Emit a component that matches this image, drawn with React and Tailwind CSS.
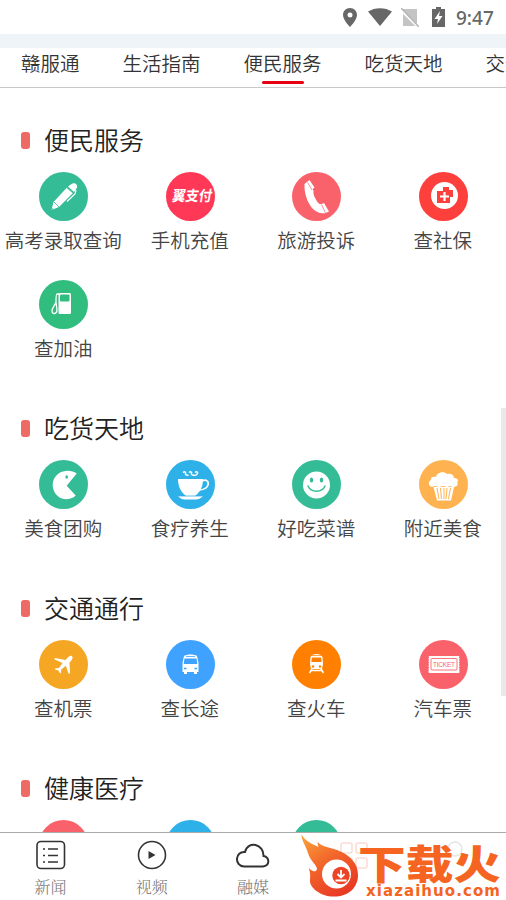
import clsx from "clsx";

const tabs = ["赣服通", "生活指南", "便民服务", "吃货天地", "交通通行"];

const sections = [
  {
    title: "便民服务",
    items: [
      { name: "高考录取查询", bg: "bg-[#33bc96]", icon: <PenIcon /> },
      { name: "手机充值", bg: "bg-[#ff3858]", icon: <PayIcon /> },
      { name: "旅游投诉", bg: "bg-[#fa626b]", icon: <PhoneIcon /> },
      { name: "查社保", bg: "bg-[#fd403c]", icon: <MedicalIcon /> },
      { name: "查加油", bg: "bg-[#31bd7e]", icon: <GasIcon /> },
    ],
  },
  {
    title: "吃货天地",
    items: [
      { name: "美食团购", bg: "bg-[#33bc96]", icon: <PacmanIcon /> },
      { name: "食疗养生", bg: "bg-[#2eb0e9]", icon: <CupIcon /> },
      { name: "好吃菜谱", bg: "bg-[#33bc96]", icon: <SmileIcon /> },
      { name: "附近美食", bg: "bg-[#ffb350]", icon: <CakeIcon /> },
    ],
  },
  {
    title: "交通通行",
    items: [
      { name: "查机票", bg: "bg-[#f5a623]", icon: <PlaneIcon /> },
      { name: "查长途", bg: "bg-[#3fa2ff]", icon: <BusIcon /> },
      { name: "查火车", bg: "bg-[#ff8000]", icon: <TrainIcon /> },
      { name: "汽车票", bg: "bg-[#fa626b]", icon: <TicketIcon /> },
    ],
  },
  {
    title: "健康医疗",
    items: [
      { name: "", bg: "bg-[#fa626b]" },
      { name: "", bg: "bg-[#2eb0e9]" },
      { name: "", bg: "bg-[#33bc96]" },
    ],
  },
];

function Icon({ children }) {
  return (
    <svg viewBox="0 0 49 49" className="block size-[49px]" fill="#fff">
      {children}
    </svg>
  );
}

function PenIcon() {
  return (
    <Icon>
      <path d="M12.500 38l2-8L28 15.500l6 5.500-14 14z" />
      <path d="M29 14.500l3.500-2.500c3-2.500 7.500 1 5 4.500L35 20z" />
      <path d="M37 18l-1 4-8 7.500" fill="none" stroke="#fff" strokeWidth="1.200" />
      <path d="M15 30l5 5M28 16l6 5" stroke="#33bc96" strokeWidth=".8" />
      <circle cx="13.500" cy="37" r=".8" fill="#33bc96" />
    </Icon>
  );
}

function PayIcon() {
  return (
    <Icon>
      <text
        x="5"
        y="29"
        fontSize="14.500"
        fontWeight="700"
        textLength="40"
        lengthAdjust="spacingAndGlyphs"
        transform="translate(5.500 0) skewX(-10)"
        fontFamily="'Noto Sans CJK SC', sans-serif"
      >
        翼支付
      </text>
    </Icon>
  );
}

function PhoneIcon() {
  return (
    <Icon>
      <path d="M12.500 12C12 20 15 30 20 36c4 4 8 6 13 5l-3-9c-2 1-4-1-5.500-3.500-2-3.500-3.500-6-3-9.500l-4-8z" />
      <path d="M12.500 12l5-4 5 7.500-4 3.500zM28.500 32.500l3.500-1.500 5 8.500-4.500 2z" />
      <path d="M15.500 10.500l4.500 7.500M29.500 32.500l4 8.500" stroke="#fa626b" strokeWidth=".7" />
    </Icon>
  );
}

function MedicalIcon() {
  return (
    <Icon>
      <circle cx="25.500" cy="23.500" r="13.500" />
      <path d="M18 19h6v-4h6v3h4v7h-3v6H18z" fill="#fd403c" />
      <path d="M25.500 20v9M21 24.500h9" stroke="#fff" strokeWidth="2.200" />
    </Icon>
  );
}

function GasIcon() {
  return (
    <Icon>
      <rect x="19.500" y="13" width="12.500" height="21" rx="1.500" />
      <rect x="21" y="14.500" width="9.500" height="7" rx="1" fill="#31bd7e" />
      <path
        d="M20 14h-2c-1 0-1 6-1 8-1 3-4 6-4 9 0 4 5 3 5-1l-1-8"
        fill="none"
        stroke="#fff"
        strokeWidth="1.300"
      />
    </Icon>
  );
}

function PacmanIcon() {
  return (
    <Icon>
      <path d="M37.700 13.500c-3-2-7-3-11-2.500-7.500.5-13 6.500-13 14s5.500 14 13 14.200c4 0 7.500-1 10-3.700l-9-9.800z" />
      <ellipse cx="27.700" cy="17" rx="1.300" ry="1.700" fill="#33bc96" />
    </Icon>
  );
}

function CupIcon() {
  return (
    <Icon>
      <path d="M12 19h25c0 8-3 13-8 17H20c-5-4-8-9-8-17z" />
      <path d="M36 21c4-2 7 0 6 4-1 3-5 5-9 5" fill="none" stroke="#fff" strokeWidth="1.700" />
      <path d="M12 36h25c-2 2.500-5 3.500-7 3.500H19c-3 0-5-1-7-3.500z" />
      <path d="M12.500 36h24" stroke="#2eb0e9" strokeWidth=".8" />
      <path
        d="M17 12.500c2-1.500 3 0 2.500 1s1 2 3 1.500M23 12.500c2-1.500 3 0 2.500 1s1 2 3 1.500M29 12.500c2-1.500 3 0 2.500 1s-1 2-3 2"
        fill="none"
        stroke="#fff"
        strokeWidth="1.500"
      />
    </Icon>
  );
}

function SmileIcon() {
  return (
    <Icon>
      <circle cx="24.500" cy="25" r="13.500" />
      <ellipse cx="19.500" cy="20" rx="1.700" ry="2.500" fill="#33bc96" />
      <ellipse cx="29.500" cy="20" rx="1.700" ry="2.500" fill="#33bc96" />
      <path d="M16 26c3 7 14 7 17 0" fill="none" stroke="#33bc96" strokeWidth="1.500" strokeLinecap="round" />
    </Icon>
  );
}

function CakeIcon() {
  return (
    <Icon>
      <path d="M13 27c-4-1-4-6-1-7-1-3 3-4 5-3 1-5 8-6 11-3 4-1 7 1 7 4 4 0 5 3 3 4 2 3-1 5-4 5l-3-1-3 1-4-1-4 1-4-1z" />
      <path d="M14.500 27h20.500l-3 13.500H18z" />
      <path
        d="M18 28l2 11M21.500 28l1 11M25 28v11M28 28l-1 11M31.500 28l-2 11"
        stroke="#ffb350"
        strokeWidth="1"
      />
    </Icon>
  );
}

function PlaneIcon() {
  return (
    <Icon>
      <path d="M33 16.200c-.8-1-3 0-4.500 1.600L26.500 20l-10.500-2-.8 1.200 8.300 3.800-3.500 5-3.500.3-.7 1.200 3.500.9 1.800 3 1-.7v-2.900l4.700-4 2.900 8.200 1.300-1-.5-10.300 2-2.500c1.300-1.500 1.500-3.200.5-4z" />
    </Icon>
  );
}

function BusIcon() {
  return (
    <Icon>
      <path d="M18 16c3-2 10-2 13 0l1.500 7v9H31v2h-3v-2h-7v2h-3v-2h-1.500v-9z" />
      <path d="M18.500 18.500h12l.8 5.500H17.700z" fill="#3fa2ff" />
      <path d="M20 16.500h9" stroke="#3fa2ff" strokeWidth=".8" />
      <path d="M18 28.500h2.500M28.500 28.500h2.500" stroke="#3fa2ff" strokeWidth="1.400" />
    </Icon>
  );
}

function TrainIcon() {
  return (
    <Icon>
      <path d="M18.500 17c1-4 11-4 12 0l.5 7-1 5H19l-1-5z" />
      <path d="M20 17.500h9l.7 4.500h-10.400z" fill="#ff8000" />
      <path d="M19 15.500h11" stroke="#ff8000" strokeWidth=".7" />
      <circle cx="21" cy="26.500" r="1.200" fill="#ff8000" />
      <circle cx="28" cy="26.500" r="1.200" fill="#ff8000" />
      <path d="M20 29l-2.500 4M29 29l2.500 4M19 30.500h11" stroke="#fff" strokeWidth="1.600" />
    </Icon>
  );
}

function TicketIcon() {
  return (
    <Icon>
      <rect x="9.500" y="16" width="31" height="17" rx="1" />
      <path d="M9.500 17v15M40.500 17v15" stroke="#fa626b" strokeWidth="1" strokeDasharray="1 1.500" />
      <rect x="12" y="18.500" width="26" height="11.500" rx="1" fill="none" stroke="#fa626b" strokeWidth=".9" />
      <text x="14" y="27" fontSize="6.500" textLength="22" fill="#fa626b" fontFamily="'Liberation Sans', sans-serif">
        TICKET
      </text>
    </Icon>
  );
}

function StatusBar() {
  return (
    <div className="flex h-[34px] items-center justify-end pr-[11px] text-[#676767]">
      <svg viewBox="0 0 14 19" className="mr-[11px] h-[19px] w-[14px]">
        <path d="M7 0C3 0 0 3 0 7c0 5 7 12 7 12s7-7 7-12c0-4-3-7-7-7zm0 4.500a2.500 2.500 0 110 5 2.500 2.500 0 010-5z" fill="currentColor" />
      </svg>
      <svg viewBox="0 0 24 18" className="mr-[9px] h-[18px] w-6">
        <path d="M0 3.500C7-1 17-1 24 3.500L12 18z" fill="currentColor" />
      </svg>
      <svg viewBox="0 0 18 19" className="mr-[13px] h-[19px] w-[18px]">
        <path d="M2 1h14v17H2z" fill="#c4c4c4" />
        <path d="M-1 1l19 19" stroke="#fff" strokeWidth="2.500" />
        <path d="M0 0l18 19" stroke="#b4b4b4" strokeWidth="1.500" />
      </svg>
      <svg viewBox="0 0 13 20" className="mr-[11px] h-5 w-[13px]">
        <path d="M4 0h5v2h4v18H0V2h4z" fill="currentColor" />
        <path d="M8 4l-5.500 8H6l-1 5 5.500-8H7z" fill="#fff" />
      </svg>
      <span className="w-[39px] pt-[2px] font-['Noto_Sans'] text-[19px] leading-none font-medium">
        9:47
      </span>
    </div>
  );
}

function NavItem({ label, children }) {
  return (
    <div className="flex w-[101.200px] flex-col items-center pt-[7px]">
      <svg viewBox="0 0 34 30" className="h-[30px] w-[34px]" fill="none" stroke="#333" strokeWidth="1.600">
        {children}
      </svg>
      <span className="mt-2 font-['Liberation_Serif','Noto_Serif_CJK_SC','Noto_Sans_CJK_SC',serif] text-[16px] leading-5 font-light text-[#777]">
        {label}
      </span>
    </div>
  );
}

function Watermark() {
  return (
    <svg viewBox="0 0 206 68" className="absolute right-0 bottom-0 h-[68px] w-[206px] overflow-visible">
      <defs>
        <linearGradient id="flame" x1="0" y1="0" x2=".6" y2="1">
          <stop offset="0" stopColor="#fba63a" />
          <stop offset=".5" stopColor="#f2662b" />
          <stop offset="1" stopColor="#e93b24" />
        </linearGradient>
      </defs>
      <path
        d="M1.300 2.300C5 9 12 12 18.500 15c-.8-2-1-3.500-.8-5C22 15 29 15 37 18c13 5 21 13 21 25 0 13-10 21.600-24 21.600S9 55 10 48c.5-5 0-8-1.300-12.500 3 4.500 7.500 5 8.300 1.500C17 33 10 29 8 21 6 14 2 10 1.300 2.300z"
        fill="url(#flame)"
      />
      <circle cx="36.500" cy="42" r="14.500" fill="#fff" />
      <circle cx="41" cy="43.500" r="8.700" fill="#eb4427" />
      <path d="M41 38v7M37.500 42l3.500 3.500 3.500-3.500M35.500 48.500h11" fill="none" stroke="#fff" strokeWidth="1.800" />
      <text
        x="58"
        y="47"
        fontSize="40"
        fontWeight="900"
        textLength="143"
        lengthAdjust="spacingAndGlyphs"
        fill="#f56420"
        fontFamily="'Noto Sans CJK SC', sans-serif"
      >
        下载火
      </text>
      <text
        x="66"
        y="63.500"
        fontSize="15"
        fontWeight="700"
        textLength="134"
        fill="#f56420"
        fontFamily="'DejaVu Sans', sans-serif"
      >
        xiazaihuo.com
      </text>
    </svg>
  );
}

export default function App() {
  const active = "便民服务";

  return (
    <div className="relative flex h-[900px] w-[506px] flex-col overflow-hidden bg-white font-['Noto_Sans_CJK_SC',sans-serif]">
      <StatusBar />
      <div className="h-[14px] shrink-0 bg-[#eff4f8]" />

      <div className="flex h-10 shrink-0 gap-[43px] overflow-hidden border-b border-[#c8c8c8] pl-[21px]">
        {tabs.map((tab) => (
          <div
            key={tab}
            className="flex shrink-0 flex-col items-center text-[19.500px] leading-[29px] font-[350] text-[#333]"
          >
            <span>{tab}</span>
            <span className={clsx("mt-1 h-[3px] w-[42px] rounded-sm", tab === active && "bg-[#e60012]")} />
          </div>
        ))}
      </div>

      <div className="min-h-0 flex-1 overflow-hidden pt-3">
        {sections.map((section) => (
          <section key={section.title}>
            <div className="flex h-[72px] items-center pt-2 pl-[21px]">
              <span className="mr-[14px] h-[17px] w-[9px] rounded-[3px] bg-[#ed6a65]" />
              <h2 className="pb-[3px] text-[25px] leading-10 font-[350] text-[#222]">{section.title}</h2>
            </div>
            <div className="grid grid-cols-[repeat(4,126.500px)]">
              {section.items.map((item, i) => (
                <div key={i} className="flex h-[108px] flex-col items-center">
                  <div className={clsx("ml-px size-[49px] shrink-0 rounded-full", item.bg)}>{item.icon}</div>
                  <span className="mt-[3px] text-[19.500px] leading-[31px] font-[350] whitespace-nowrap text-[#444]">
                    {item.name}
                  </span>
                </div>
              ))}
            </div>
          </section>
        ))}
      </div>

      {/* scroll thumb */}
      <div className="absolute top-[408px] right-0 h-[288px] w-[5px] bg-[#e9e9e9]" />

      <div className="flex h-[68px] shrink-0 border-t border-[#aaa] bg-white">
        <NavItem label="新闻">
          <rect x="3" y="1.500" width="27.500" height="27" rx="4" />
          <path d="M9 9h2M14 9h10M9 15.500h2M14 15.500h10M9 22h2M14 22h10" />
        </NavItem>
        <NavItem label="视频">
          <circle cx="17" cy="15" r="13.500" />
          <path d="M13.500 11l7 4-7 4z" fill="#333" stroke="none" />
        </NavItem>
        <NavItem label="融媒">
          <path d="M8 26.500h19c7-1 7-9 .5-10.500C28 4 12 0 9 12-1 11-2 26 8 26.500z" strokeWidth="2" />
        </NavItem>
        <NavItem label="">
          <g stroke="#fbdcd6">
            <rect x="4" y="3" width="11" height="10" rx="2" />
            <rect x="19" y="3" width="11" height="10" rx="2" />
            <rect x="4" y="18" width="11" height="10" rx="2" />
            <rect x="19" y="18" width="11" height="10" rx="2" />
          </g>
        </NavItem>
        <NavItem label="">
          <circle cx="17" cy="9" r="7" stroke="#e6e6e6" />
        </NavItem>
      </div>
      <Watermark />
    </div>
  );
}
